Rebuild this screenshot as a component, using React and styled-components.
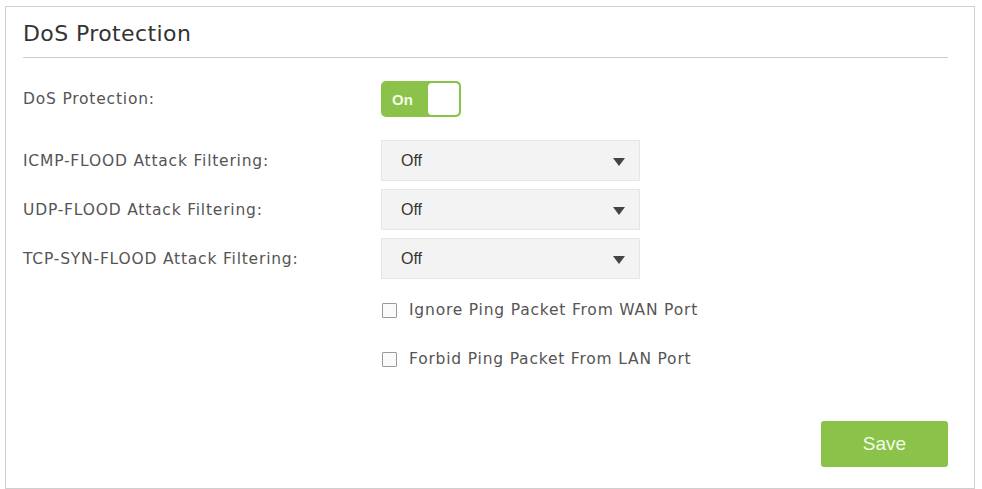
import React from "react";
import styled, { createGlobalStyle } from "styled-components";

const GlobalStyle = createGlobalStyle`
  html, body {
    margin: 0;
    padding: 0;
    background: #fff;
  }
  body {
    font-family: "DejaVu Sans", "Liberation Sans", sans-serif;
  }
`;

let Panel = styled.section`
  box-sizing: border-box;
  margin: 6px 0 0 5px;
  width: 970px;
  height: 483px;
  border: 1px solid #cfcfcf;
  padding: 0 26px 0 17px;
  display: flex;
  flex-direction: column;
`;

let Title = styled.h2`
  margin: 0;
  padding: 13px 0 9px;
  font-family: "DejaVu Sans", sans-serif;
  font-weight: 400;
  font-size: 22px;
  letter-spacing: 0.4px;
  line-height: 28px;
  color: #333;
  border-bottom: 1px solid #cccccc;
`;

let Form = styled.div`
  display: grid;
  grid-template-columns: 358px 1fr;
  row-gap: 8px;
  padding-top: 23px;
`;

let Label = styled.div`
  font-size: 15.5px;
  letter-spacing: 0.8px;
  color: #555;
  display: flex;
  align-items: center;
  height: ${p => p.$h || 41}px;
  margin-top: ${p => p.$top || 0}px;
`;

let Field = styled.div`
  display: flex;
  align-items: center;
  height: ${p => p.$h || 41}px;
  margin-top: ${p => p.$top || 0}px;
`;

let Toggle = styled.div`
  box-sizing: border-box;
  width: 80px;
  height: 36px;
  border-radius: 5px;
  background: #8bc34a;
  border: 2px solid #8bc34a;
  display: flex;
  align-items: center;
  justify-content: space-between;
  padding-left: 9px;
`;

let ToggleText = styled.span`
  font-family: "Liberation Sans", sans-serif;
  font-weight: 700;
  font-size: 15px;
  color: #f4fbe9;
`;

let Knob = styled.span`
  width: 31px;
  height: 32px;
  border-radius: 4px;
  background: #fff;
`;

let Select = styled.div`
  box-sizing: border-box;
  width: 259px;
  height: 41px;
  background: #f3f3f3;
  border: 1px solid #e6e6e6;
  display: flex;
  align-items: center;
  justify-content: space-between;
  padding: 0 14px 0 19px;
`;

let SelectText = styled.span`
  font-family: "Liberation Sans", sans-serif;
  font-size: 16px;
  color: #333;
`;

let Arrow = styled.span`
  width: 0;
  height: 0;
  border-left: 6px solid transparent;
  border-right: 6px solid transparent;
  border-top: 8px solid #444;
  margin-top: 2px;
`;

let Checks = styled.div`
  display: flex;
  flex-direction: column;
  gap: 27px;
  padding: 20px 0 0 358px;
`;

let CheckRow = styled.label`
  display: flex;
  align-items: center;
  gap: 12px;
  font-size: 15.5px;
  letter-spacing: 0.8px;
  color: #555;
  height: 22px;
`;

let Box = styled.span`
  box-sizing: border-box;
  width: 15px;
  height: 15px;
  border: 1px solid #999;
  border-radius: 1px;
  background: #fafafa;
  margin-left: 1px;
`;

let Footer = styled.div`
  margin-top: auto;
  display: flex;
  justify-content: flex-end;
  padding-bottom: 21px;
`;

let SaveBtn = styled.button`
  width: 127px;
  height: 46px;
  border: 0;
  border-radius: 3px;
  background: #8bc34a;
  color: #f4fbe9;
  font-family: "Liberation Sans", sans-serif;
  font-size: 19px;
  cursor: pointer;
`;

const filters = [
  "ICMP-FLOOD Attack Filtering:",
  "UDP-FLOOD Attack Filtering:",
  "TCP-SYN-FLOOD Attack Filtering:",
];

const pings = [
  "Ignore Ping Packet From WAN Port",
  "Forbid Ping Packet From LAN Port",
];

export default function App() {
  return (
    <React.Fragment>
      <GlobalStyle />
      <Panel>
        <Title>DoS Protection</Title>
        <Form>
          <Label $h={36}>DoS Protection:</Label>
          <Field $h={36}>
            <Toggle>
              <ToggleText>On</ToggleText>
              <Knob />
            </Toggle>
          </Field>
          {filters.map((f, i) => (
            <React.Fragment key={f}>
              <Label $top={i === 0 ? 15 : 0}>{f}</Label>
              <Field $top={i === 0 ? 15 : 0}>
                <Select>
                  <SelectText>Off</SelectText>
                  <Arrow />
                </Select>
              </Field>
            </React.Fragment>
          ))}
        </Form>
        <Checks>
          {pings.map(p => (
            <CheckRow key={p}>
              <Box />
              {p}
            </CheckRow>
          ))}
        </Checks>
        <Footer>
          <SaveBtn>Save</SaveBtn>
        </Footer>
      </Panel>
    </React.Fragment>
  );
}
